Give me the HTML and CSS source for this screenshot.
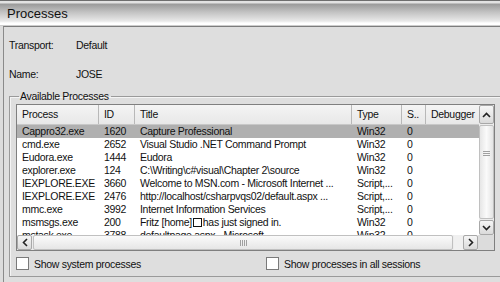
FILE: index.html
```html
<!DOCTYPE html>
<html>
<head>
<meta charset="utf-8">
<link rel="stylesheet" href="styles.css">
</head>
<body>
<div class="window">
  <div class="titlebar"><span class="title">Processes</span></div>
  <div class="panel">
    <div class="field"><span class="label">Transport:</span><span class="value">Default</span></div>
    <div class="field"><span class="label">Name:</span><span class="value">JOSE</span></div>
    <fieldset class="group">
      <legend>Available Processes</legend>
      <div class="list">
        <div class="list-main">
          <div class="table-area">
            <div class="row header">
              <div class="c c1">Process</div><div class="c c2">ID</div><div class="c c3">Title</div><div class="c c4">Type</div><div class="c c5">S..</div><div class="c c6">Debugger</div>
            </div>
            <div class="row selected"><div class="c c1">Cappro32.exe</div><div class="c c2">1620</div><div class="c c3">Capture Professional</div><div class="c c4">Win32</div><div class="c c5">0</div><div class="c c6"></div></div>
            <div class="row"><div class="c c1">cmd.exe</div><div class="c c2">2652</div><div class="c c3">Visual Studio .NET Command Prompt</div><div class="c c4">Win32</div><div class="c c5">0</div><div class="c c6"></div></div>
            <div class="row"><div class="c c1">Eudora.exe</div><div class="c c2">1444</div><div class="c c3">Eudora</div><div class="c c4">Win32</div><div class="c c5">0</div><div class="c c6"></div></div>
            <div class="row"><div class="c c1">explorer.exe</div><div class="c c2">124</div><div class="c c3">C:\Writing\c#visual\Chapter 2\source</div><div class="c c4">Win32</div><div class="c c5">0</div><div class="c c6"></div></div>
            <div class="row"><div class="c c1">IEXPLORE.EXE</div><div class="c c2">3660</div><div class="c c3">Welcome to MSN.com - Microsoft Internet ...</div><div class="c c4">Script,...</div><div class="c c5">0</div><div class="c c6"></div></div>
            <div class="row"><div class="c c1">IEXPLORE.EXE</div><div class="c c2">2476</div><div class="c c3">http://localhost/csharpvqs02/default.aspx ...</div><div class="c c4">Script,...</div><div class="c c5">0</div><div class="c c6"></div></div>
            <div class="row"><div class="c c1">mmc.exe</div><div class="c c2">3992</div><div class="c c3">Internet Information Services</div><div class="c c4">Script,...</div><div class="c c5">0</div><div class="c c6"></div></div>
            <div class="row"><div class="c c1">msmsgs.exe</div><div class="c c2">200</div><div class="c c3">Fritz [home]<span class="box"></span>has just signed in.</div><div class="c c4">Win32</div><div class="c c5">0</div><div class="c c6"></div></div>
            <div class="row"><div class="c c1">mstask.exe</div><div class="c c2">3788</div><div class="c c3">defaultpage.aspx - Microsoft</div><div class="c c4">Win32</div><div class="c c5">0</div><div class="c c6"></div></div>
          </div>
          <div class="vscroll">
            <div class="sbtn up"><svg width="9" height="6" viewBox="0 0 9 6"><path d="M1 5 L4.5 1.5 L8 5" fill="none" stroke="#222" stroke-width="1.6"/></svg></div>
            <div class="vthumb"><span class="grip-h"></span></div>
            <div class="sbtn"><svg width="9" height="6" viewBox="0 0 9 6"><path d="M1 1 L4.5 4.5 L8 1" fill="none" stroke="#222" stroke-width="1.6"/></svg></div>
          </div>
        </div>
        <div class="hscroll">
          <div class="sbtn"><svg width="6" height="9" viewBox="0 0 6 9"><path d="M5 1 L1.5 4.5 L5 8" fill="none" stroke="#222" stroke-width="1.6"/></svg></div>
          <div class="hthumb"><span class="grip-v"></span></div>
          <div class="htrack"></div>
          <div class="sbtn"><svg width="6" height="9" viewBox="0 0 6 9"><path d="M1 1 L4.5 4.5 L1 8" fill="none" stroke="#222" stroke-width="1.6"/></svg></div>
          <div class="corner"></div>
        </div>
      </div>
      <div class="checks">
        <label class="check"><span class="cb"></span>Show system processes</label>
        <label class="check"><span class="cb"></span>Show processes in all sessions</label>
      </div>
    </fieldset>
  </div>
</div>
</body>
</html>
```
FILE: styles.css
```css
html, body {
  margin: 0;
  padding: 0;
}
body {
  width: 500px;
  height: 282px;
  overflow: hidden;
  background: #dcdcdc;
  font-family: "Liberation Sans", Arial, sans-serif;
  font-size: 10.5px;
  letter-spacing: -0.3px;
  color: #111;
}
.window {
  width: 500px;
  height: 282px;
  display: flex;
  flex-direction: column;
}
.titlebar {
  height: 26px;
  box-sizing: border-box;
  border-top: 1px solid #6e6e6e;
  background: linear-gradient(#e2e2e2 0px, #e2e2e2 2px, #9a9a9a 3px, #c2c2c2 11px, #e8e8e8 20px, #f2f2f2 21px, #ffffff 22px, #ffffff 24px, #9a9a9a 25px);
  display: flex;
  align-items: center;
  padding-left: 7px;
  padding-bottom: 0px;
}
.title {
  font-size: 13px;
  letter-spacing: 0;
  color: #111;
}
.panel {
  flex: 1;
  border-top: 1px solid #7c7c7c;
  border-left: 1px solid #8a8a8a;
  margin-left: 3px;
  background: #dedede;
  display: flex;
  flex-direction: column;
  padding-left: 4px;
}
.field {
  display: flex;
  height: 14px;
  align-items: center;
  margin-top: 11px;
}
.field + .field {
  margin-top: 15px;
}
.label {
  width: 67px;
  padding-left: 1px;
}
.group {
  margin: 9px -20px 5px 1px;
  padding: 0 0 0 6px;
  border: 1px solid #9a9a9a;
  box-shadow: 1px 1px 0 #f4f4f4 inset;
  flex: 1;
  min-width: 0;
}
.group legend {
  padding: 0 2px 0 1px;
  margin-left: 3px;
  line-height: 12px;
}
.list {
  width: 477px;
  height: 145px;
  border: 1px solid #7f7f7f;
  background: #fff;
  display: flex;
  flex-direction: column;
  margin-top: 2px;
}
.list-main {
  flex: 1;
  display: flex;
  min-height: 0;
  overflow: hidden;
}
.table-area {
  flex: 1;
  overflow: hidden;
}
.row {
  display: flex;
  height: 13px;
  line-height: 13px;
  white-space: nowrap;
}
.row.header {
  height: 19px;
  line-height: 19px;
  background: linear-gradient(#f4f4f4, #e8e8e8);
  border-bottom: 1px solid #c8c8c8;
}
.row.header .c {
  border-right: 1px solid #b8b8b8;
}
.row.selected {
  background: #b0b0b0;
}
.c {
  overflow: hidden;
  padding-left: 5px;
  box-sizing: border-box;
  flex: none;
}
.c1 { width: 82px; }
.c2 { width: 36px; }
.c3 { width: 217px; }
.c4 { width: 50px; }
.c5 { width: 24px; }
.c6 { width: 54px; }
.box {
  display: inline-block;
  width: 7px;
  height: 7px;
  border: 1px solid #111;
  margin: 0 1px;
  vertical-align: -1px;
}
.vscroll {
  width: 15px;
  display: flex;
  flex-direction: column;
  background: #ececec;
}
.sbtn {
  width: 15px;
  height: 15px;
  box-sizing: border-box;
  border: 1px solid #a8a8a8;
  border-radius: 2px;
  background: linear-gradient(#f6f6f6, #dadada);
  display: flex;
  align-items: center;
  justify-content: center;
  flex: none;
}
.sbtn.up {
  height: 19px;
}
.vthumb {
  flex: 1;
  margin: 1px 0;
  border: 1px solid #c0c0c0;
  border-radius: 2px;
  background: linear-gradient(90deg, #e6e6e6, #fafafa 50%, #e4e4e4);
  display: flex;
  justify-content: center;
  padding-top: 25px;
}
.grip-h {
  width: 7px;
  height: 5px;
  background: repeating-linear-gradient(#a0a0a0 0 1px, transparent 1px 2px);
}
.hscroll {
  height: 15px;
  display: flex;
  background: #ececec;
}
.hthumb {
  width: 420px;
  margin: 0 1px;
  border: 1px solid #c0c0c0;
  border-radius: 2px;
  background: linear-gradient(#fafafa, #e6e6e6);
  display: flex;
  align-items: center;
  justify-content: center;
  box-sizing: border-box;
}
.grip-v {
  width: 7px;
  height: 6px;
  background: repeating-linear-gradient(90deg, #a0a0a0 0 1px, transparent 1px 2px);
}
.htrack {
  flex: 1;
  background: #f0f0f0;
}
.corner {
  width: 16px;
  background: #dcdcdc;
}
.checks {
  display: flex;
  margin-top: 6px;
  height: 13px;
  align-items: center;
}
.check {
  display: flex;
  align-items: center;
  width: 250px;
}
.cb {
  width: 11px;
  height: 11px;
  border: 1px solid #7a7a7a;
  background: #fff;
  margin-right: 5px;
  margin-left: 0px;
}
```
